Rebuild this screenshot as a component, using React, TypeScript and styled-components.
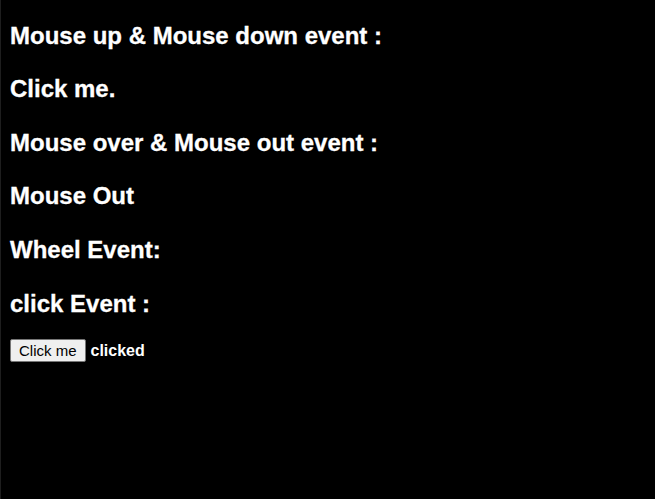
import React from "react";
import styled, { createGlobalStyle } from "styled-components";

const GlobalStyle = createGlobalStyle`
  html, body {
    margin: 0;
    padding: 0;
    background: #000;
  }
  body {
    font-family: "Liberation Sans", Arial, sans-serif;
    color: #fff;
  }
`;

const Page = styled.div`
  display: flow-root;
  min-height: 100vh;
  box-sizing: border-box;
  border-left: 1px solid #1e1e1e;
  padding: 0 9px;
  background: #000;
`;

const Heading = styled.h2`
  margin: 17.6px 0;
  font-family: "Liberation Sans", Arial, sans-serif;
  font-size: 24px;
  line-height: 36px;
  font-weight: 700;
  color: #fff;
  -webkit-text-stroke: 0.3px #fff;
`;

const ClickRow = styled.div`
  display: flex;
  align-items: center;
  gap: 5px;
`;

const Button = styled.button`
  box-sizing: border-box;
  height: 23px;
  font-family: "Liberation Sans", Arial, sans-serif;
  font-size: 15px;
  line-height: 17px;
  padding: 0 8px;
  color: #000;
  background: #efefef;
  border: 1px solid #767676;
  border-radius: 2px;
  cursor: pointer;
`;

const Status = styled.span`
  font-size: 16px;
  font-weight: 700;
  color: #fff;
`;

export default function App() {
  const [clicked, setClicked] = React.useState(true);
  return (
    <>
      <GlobalStyle />
      <Page>
        <Heading>Mouse up &amp; Mouse down event :</Heading>
        <Heading>Click me.</Heading>
        <Heading>Mouse over &amp; Mouse out event :</Heading>
        <Heading>Mouse Out</Heading>
        <Heading>Wheel Event:</Heading>
        <Heading>click Event :</Heading>
        <ClickRow>
          <Button onClick={() => setClicked(true)}>Click me</Button>
          <Status>{clicked ? "clicked" : ""}</Status>
        </ClickRow>
      </Page>
    </>
  );
}
